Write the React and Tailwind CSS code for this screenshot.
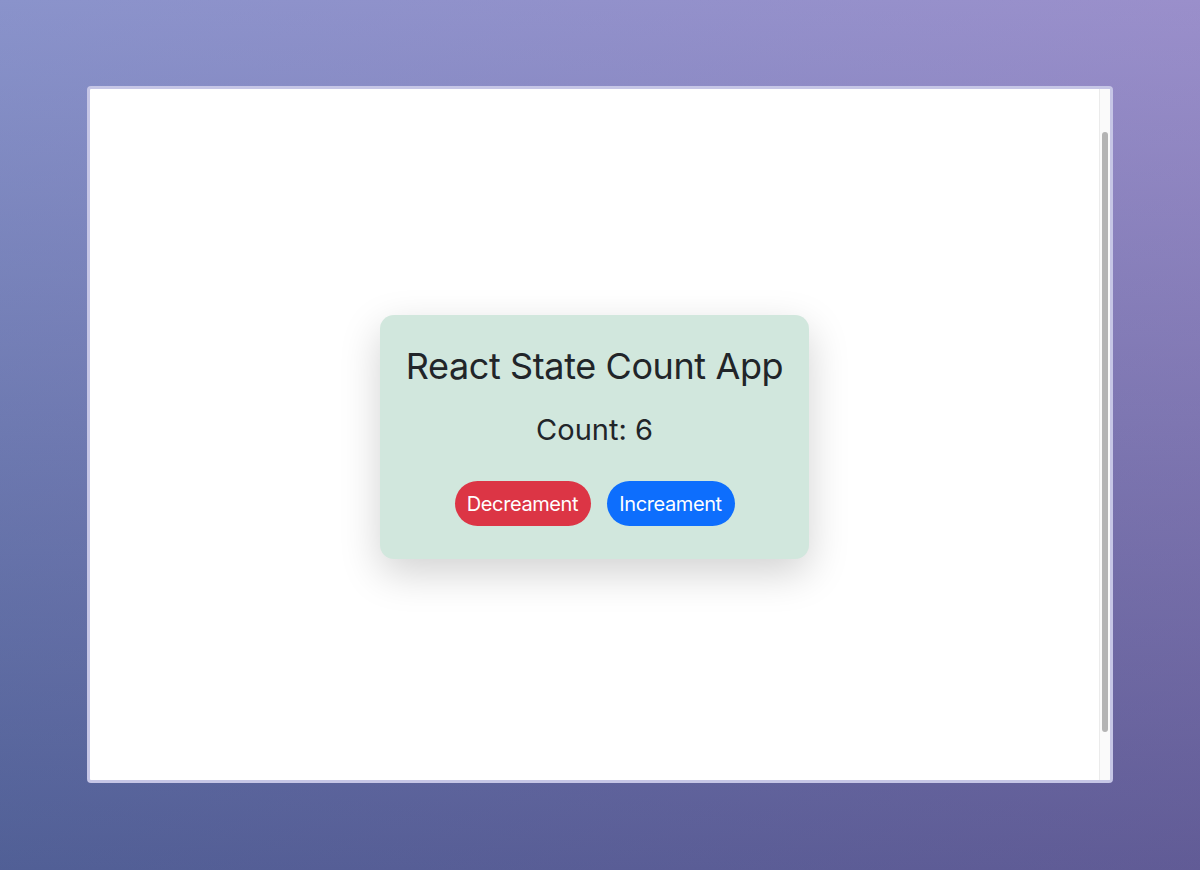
export default function App() {
  return (
    <div
      className="w-[1200px] h-[870px] pt-[86px] pl-[87px] bg-[linear-gradient(to_right,rgba(119,156,203,0.3),rgba(173,143,203,0.3)),linear-gradient(to_bottom,#928fcb,#40457f)]"
      style={{ fontFamily: "Inter, 'Liberation Sans', sans-serif" }}
    >
      <div className="w-[1026px] h-[697px] rounded-[4px] border-[3px] border-[#c6c6e6] bg-white flex overflow-hidden">
        <div className="flex-1 flex items-center justify-center pt-[5px]">
          <div className="w-[429px] h-[244px] rounded-[14px] bg-[#d1e7dd] shadow-[0_14px_40px_rgba(0,0,0,0.18)] flex flex-col items-center pt-[30px] text-[#212529]">
            <h1 className="text-[36px] leading-[43px] font-normal tracking-[-0.4px]">React State Count App</h1>
            <div className="mt-[24px] text-[29px] leading-[35px]">Count: 6</div>
            <div className="mt-[34px] flex gap-[16px]">
              <button className="h-[45px] w-[136px] rounded-full bg-[#dc3545] text-white text-[20px] tracking-[-0.4px]">Decreament</button>
              <button className="h-[45px] w-[128px] rounded-full bg-[#0d6efd] text-white text-[20px] tracking-[-0.4px]">Increament</button>
            </div>
          </div>
        </div>
        <div className="w-[11px] border-l border-[#ebebeb] bg-[#fafafa] pt-[43px] pb-[48px] flex justify-center">
          <div className="w-[6px] h-full rounded-full bg-[#b4b4b4]" />
        </div>
      </div>
    </div>
  );
}
